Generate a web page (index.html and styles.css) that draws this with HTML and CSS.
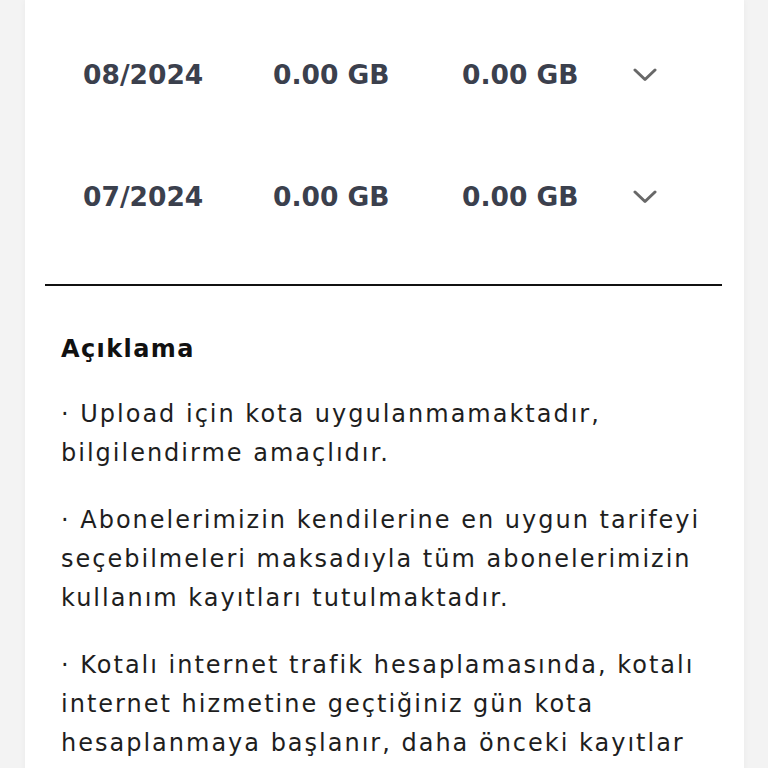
FILE: index.html
```html
<!DOCTYPE html>
<html lang="tr">
<head>
<meta charset="utf-8">
<title>Kullanım</title>
<link rel="stylesheet" href="styles.css">
</head>
<body>
<div class="card">
  <div class="table">
    <div class="row">
      <span class="cell">08/2024</span>
      <span class="cell">0.00 GB</span>
      <span class="cell">0.00 GB</span>
      <svg class="chev" viewBox="0 0 24 14" width="24" height="14"><path d="M2 2 L12 11.5 L22 2" fill="none" stroke="#686868" stroke-width="3" stroke-linecap="round" stroke-linejoin="round"/></svg>
    </div>
    <div class="row">
      <span class="cell">07/2024</span>
      <span class="cell">0.00 GB</span>
      <span class="cell">0.00 GB</span>
      <svg class="chev" viewBox="0 0 24 14" width="24" height="14"><path d="M2 2 L12 11.5 L22 2" fill="none" stroke="#686868" stroke-width="3" stroke-linecap="round" stroke-linejoin="round"/></svg>
    </div>
  </div>
  <div class="divider"></div>
  <div class="desc">
    <h2 class="desc-title">Açıklama</h2>
    <p class="desc-text">· Upload için kota uygulanmamaktadır, bilgilendirme amaçlıdır.</p>
    <p class="desc-text">· Abonelerimizin kendilerine en uygun tarifeyi seçebilmeleri maksadıyla tüm abonelerimizin kullanım kayıtları tutulmaktadır.</p>
    <p class="desc-text">· Kotalı internet trafik hesaplamasında, kotalı internet hizmetine geçtiğiniz gün kota hesaplanmaya başlanır, daha önceki kayıtlar hesaplamaya dahil edilmez.</p>
  </div>
</div>
</body>
</html>
```
FILE: styles.css
```css
html, body {
  margin: 0;
  padding: 0;
}
body {
  background: #f3f3f3;
  font-family: "DejaVu Sans", "Liberation Sans", sans-serif;
  overflow: hidden;
}
.card {
  margin: 0 24px 0 25px;
  background: #ffffff;
  box-shadow: 0 0 6px rgba(0,0,0,0.04);
  padding: 14px 22px 0 20px;
}
.row {
  display: grid;
  grid-template-columns: 190px 189px 171px 24px;
  align-items: center;
  height: 122px;
  padding-left: 38px;
}
.cell {
  font-size: 26.5px;
  font-weight: bold;
  color: #3b404d;
  line-height: 30px;
}
.chev {
  display: block;
}
.divider {
  height: 2px;
  background: #111111;
  margin-top: 26px;
}
.desc {
  padding: 0 8px 0 16px;
}
.desc-title {
  margin: 48px 0 0 0;
  font-size: 24px;
  line-height: 30px;
  font-weight: bold;
  letter-spacing: 1.4px;
  color: #111111;
}
.desc-text {
  margin: 31px 0 0 0;
  font-size: 24px;
  line-height: 39px;
  letter-spacing: 2px;
  color: #1e1e1e;
}
.desc-text + .desc-text {
  margin-top: 28px;
}
```
